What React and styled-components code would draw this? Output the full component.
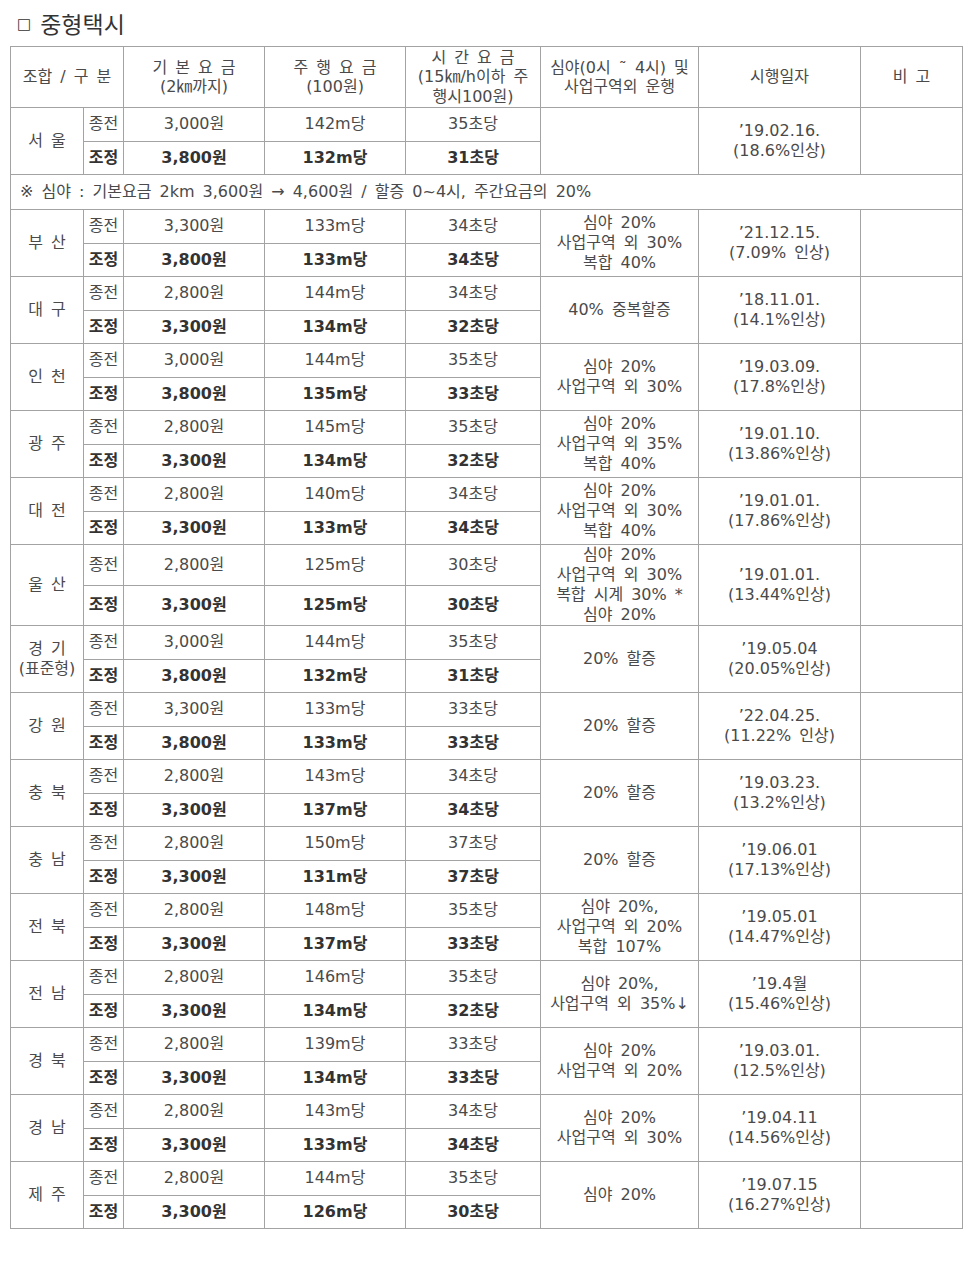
import styled, { createGlobalStyle } from "styled-components"

const GlobalStyle = createGlobalStyle`
  body {
    margin: 0;
    background: #fff;
    font-family: "DejaVu Sans", "Noto Sans CJK KR", sans-serif;
    color: #444;
  }
`

const Page = styled.div`
  padding: 0 10px;
  width: 952px;
`

const Title = styled.h2`
  margin: 0;
  height: 46px;
  display: flex;
  align-items: center;
  gap: 9px;
  padding-left: 7px;
  font-size: 23px;
  font-weight: normal;
  color: #333;
  > span:first-child {
    font-size: 15px;
    padding-top: 2px;
  }
`

const Table = styled.table`
  width: 952px;
  table-layout: fixed;
  border-collapse: collapse;
  font-size: 16px;
  line-height: 20px;
  word-spacing: 3px;
`

const Cell = styled.td`
  border: 1px solid #a3a3a3;
  padding: 0 2px;
  height: 32.5px;
  text-align: ${p => p.$left ? "left" : "center"};
  padding-left: ${p => p.$left ? "9px" : "2px"};
  vertical-align: middle;
  font-weight: ${p => p.$bold ? "bold" : "normal"};
  color: ${p => p.$bold ? "#333" : "#4a4a4a"};
  white-space: nowrap;
`

const Head = styled.th`
  border: 1px solid #a3a3a3;
  height: 60px;
  padding: 0;
  font-weight: normal;
  color: #4a4a4a;
  vertical-align: middle;
  line-height: 19.5px;
`

const rows = [
  { name: ["서 울"], a: ["3,000원", "142m당", "35초당"], b: ["3,800원", "132m당", "31초당"], night: [], date: ["’19.02.16.", "(18.6%인상)"] },
  { note: "※ 심야 : 기본요금 2km 3,600원 → 4,600원 / 할증 0~4시, 주간요금의 20%" },
  { name: ["부 산"], a: ["3,300원", "133m당", "34초당"], b: ["3,800원", "133m당", "34초당"], night: ["심야 20%", "사업구역 외 30%", "복합 40%"], date: ["’21.12.15.", "(7.09% 인상)"] },
  { name: ["대 구"], a: ["2,800원", "144m당", "34초당"], b: ["3,300원", "134m당", "32초당"], night: ["40% 중복할증"], date: ["’18.11.01.", "(14.1%인상)"] },
  { name: ["인 천"], a: ["3,000원", "144m당", "35초당"], b: ["3,800원", "135m당", "33초당"], night: ["심야 20%", "사업구역 외 30%"], date: ["’19.03.09.", "(17.8%인상)"] },
  { name: ["광 주"], a: ["2,800원", "145m당", "35초당"], b: ["3,300원", "134m당", "32초당"], night: ["심야 20%", "사업구역 외 35%", "복합 40%"], date: ["’19.01.10.", "(13.86%인상)"] },
  { name: ["대 전"], a: ["2,800원", "140m당", "34초당"], b: ["3,300원", "133m당", "34초당"], night: ["심야 20%", "사업구역 외 30%", "복합 40%"], date: ["’19.01.01.", "(17.86%인상)"] },
  { name: ["울 산"], a: ["2,800원", "125m당", "30초당"], b: ["3,300원", "125m당", "30초당"], night: ["심야 20%", "사업구역 외 30%", "복합 시계 30% *", "심야 20%"], date: ["’19.01.01.", "(13.44%인상)"] },
  { name: ["경 기", "(표준형)"], a: ["3,000원", "144m당", "35초당"], b: ["3,800원", "132m당", "31초당"], night: ["20% 할증"], date: ["’19.05.04", "(20.05%인상)"] },
  { name: ["강 원"], a: ["3,300원", "133m당", "33초당"], b: ["3,800원", "133m당", "33초당"], night: ["20% 할증"], date: ["’22.04.25.", "(11.22% 인상)"] },
  { name: ["충 북"], a: ["2,800원", "143m당", "34초당"], b: ["3,300원", "137m당", "34초당"], night: ["20% 할증"], date: ["’19.03.23.", "(13.2%인상)"] },
  { name: ["충 남"], a: ["2,800원", "150m당", "37초당"], b: ["3,300원", "131m당", "37초당"], night: ["20% 할증"], date: ["’19.06.01", "(17.13%인상)"] },
  { name: ["전 북"], a: ["2,800원", "148m당", "35초당"], b: ["3,300원", "137m당", "33초당"], night: ["심야 20%,", "사업구역 외 20%", "복합 107%"], date: ["’19.05.01", "(14.47%인상)"] },
  { name: ["전 남"], a: ["2,800원", "146m당", "35초당"], b: ["3,300원", "134m당", "32초당"], night: ["심야 20%,", "사업구역 외 35%↓"], date: ["’19.4월", "(15.46%인상)"] },
  { name: ["경 북"], a: ["2,800원", "139m당", "33초당"], b: ["3,300원", "134m당", "33초당"], night: ["심야 20%", "사업구역 외 20%"], date: ["’19.03.01.", "(12.5%인상)"] },
  { name: ["경 남"], a: ["2,800원", "143m당", "34초당"], b: ["3,300원", "133m당", "34초당"], night: ["심야 20%", "사업구역 외 30%"], date: ["’19.04.11", "(14.56%인상)"] },
  { name: ["제 주"], a: ["2,800원", "144m당", "35초당"], b: ["3,300원", "126m당", "30초당"], night: ["심야 20%"], date: ["’19.07.15", "(16.27%인상)"] },
]

function Lines({ items }) {
  return items.map((t, i) => (
    <span key={i}>{i > 0 && <br />}{t}</span>
  ))
}

function Region({ r }) {
  return (
    <>
      <tr>
        <Cell rowSpan={2}><Lines items={r.name} /></Cell>
        <Cell>종전</Cell>
        {r.a.map((v, i) => <Cell key={i}>{v}</Cell>)}
        <Cell rowSpan={2}><Lines items={r.night} /></Cell>
        <Cell rowSpan={2}><Lines items={r.date} /></Cell>
        <Cell rowSpan={2}></Cell>
      </tr>
      <tr>
        <Cell $bold>조정</Cell>
        {r.b.map((v, i) => <Cell key={i} $bold>{v}</Cell>)}
      </tr>
    </>
  )
}

export default function App() {
  return (
    <Page>
      <GlobalStyle />
      <Title><span>□</span><span>중형택시</span></Title>
      <Table>
        <colgroup>
          <col style={{ width: 73 }} />
          <col style={{ width: 40 }} />
          <col style={{ width: 141 }} />
          <col style={{ width: 141 }} />
          <col style={{ width: 135 }} />
          <col style={{ width: 158 }} />
          <col style={{ width: 162 }} />
          <col style={{ width: 102 }} />
        </colgroup>
        <thead>
          <tr>
            <Head colSpan={2}>조합 / 구 분</Head>
            <Head>기 본 요 금<br />(2㎞까지)</Head>
            <Head>주 행 요 금<br />(100원)</Head>
            <Head>시 간 요 금<br />(15㎞/h이하 주<br />행시100원)</Head>
            <Head>심야(0시 ˜ 4시) 및<br />사업구역외 운행</Head>
            <Head>시행일자</Head>
            <Head>비 고</Head>
          </tr>
        </thead>
        <tbody>
          {rows.map((r, i) =>
            r.note ? (
              <tr key={i}>
                <Cell colSpan={8} $left style={{ height: 34 }}>{r.note}</Cell>
              </tr>
            ) : (
              <Region key={i} r={r} />
            )
          )}
        </tbody>
      </Table>
    </Page>
  )
}
